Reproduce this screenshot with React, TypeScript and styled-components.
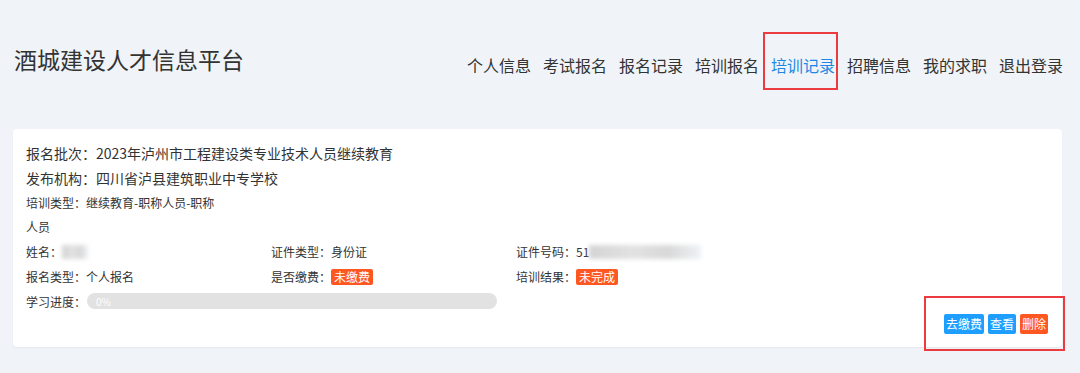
import styled, { createGlobalStyle } from 'styled-components'

const GlobalStyle = createGlobalStyle`
  html, body {
    margin: 0;
    padding: 0;
    background-color: #f0f3f7;
    font-family: "Noto Sans CJK SC", "Liberation Sans", sans-serif;
    color: #333;
  }
`

const navItems = ['个人信息', '考试报名', '报名记录', '培训报名', '培训记录', '招聘信息', '我的求职', '退出登录']

const App = () => {
  return (
    <Page>
      <GlobalStyle />
      <Header>
        <Title>酒城建设人才信息平台</Title>
        <Nav>
          {navItems.map((item) => (
            <NavItem key={item} $active={item === '培训记录'}>
              {item}
            </NavItem>
          ))}
        </Nav>
      </Header>

      <Card>
        <BigLine>报名批次：2023年泸州市工程建设类专业技术人员继续教育</BigLine>
        <BigLine>发布机构：四川省泸县建筑职业中专学校</BigLine>
        <TypeLine>培训类型：继续教育-职称人员-职称人员</TypeLine>

        <InfoGrid>
          <Cell>
            姓名：<Blurred $width={26} />
          </Cell>
          <Cell>证件类型：身份证</Cell>
          <Cell>
            证件号码：51<Blurred $width={112} />
          </Cell>

          <Cell>报名类型：个人报名</Cell>
          <Cell>
            是否缴费：<Tag>未缴费</Tag>
          </Cell>
          <Cell>
            培训结果：<Tag>未完成</Tag>
          </Cell>

          <Cell $wide>
            学习进度：
            <Progress>
              <ProgressText>0%</ProgressText>
            </Progress>
          </Cell>
        </InfoGrid>

        <Actions>
          <ButtonGroup>
            <SmallButton>去缴费</SmallButton>
            <SmallButton>查看</SmallButton>
            <SmallButton $danger>删除</SmallButton>
          </ButtonGroup>
        </Actions>
      </Card>
    </Page>
  )
}

export default App


const Page = styled.div`
  width: 1080px;
  height: 373px;
  overflow: hidden;
`

const Header = styled.div`
  height: 129px;
  display: flex;
  flex-direction: row;
  justify-content: space-between;
  align-items: flex-start;
  padding: 0 17px 0 14px;
  box-sizing: border-box;
`

const Title = styled.h1`
  margin: 43px 0 0 0;
  font-size: 23px;
  line-height: 32px;
  font-weight: 400;
  color: #333;
`

const Nav = styled.div`
  margin-top: 53px;
  display: flex;
  flex-direction: row;
  gap: 12px;
`

const NavItem = styled.div<{ $active?: boolean }>`
  position: relative;
  font-size: 16px;
  line-height: 24px;
  color: ${(p) => (p.$active ? '#1e88e5' : '#333')};
  cursor: pointer;

  ${(p) =>
    p.$active &&
    `
    &::after {
      content: '';
      position: absolute;
      left: -8px;
      right: -3px;
      top: -21px;
      bottom: -13px;
      border: 2px solid #ec3b3e;
    }
  `}
`

const Card = styled.div`
  margin: 0 18px 0 13px;
  background-color: #fff;
  border-radius: 4px;
  box-shadow: 0 1px 2px rgba(0, 0, 0, 0.05);
  padding: 12px 14px 13px 13px;
  box-sizing: border-box;
`

const BigLine = styled.div`
  font-size: 14px;
  line-height: 25px;
  color: #333;
`

const TypeLine = styled.div`
  width: 200px;
  font-size: 12px;
  line-height: 24px;
  color: #333;
`

const InfoGrid = styled.div`
  display: grid;
  grid-template-columns: 245px 245px 1fr;
  grid-auto-rows: 25px;
`

const Cell = styled.div<{ $wide?: boolean }>`
  display: flex;
  flex-direction: row;
  align-items: center;
  font-size: 12px;
  color: #333;
  grid-column: ${(p) => (p.$wide ? '1 / span 3' : 'auto')};
  height: ${(p) => (p.$wide ? '24px' : '25px')};
`

const Blurred = styled.span<{ $width: number }>`
  display: inline-block;
  width: ${(p) => p.$width}px;
  height: 14px;
  background: linear-gradient(90deg, #d4d4d4, #e2e2e2 40%, #d8d8d8 70%, #eef2f6);
  filter: blur(2px);
`

const Tag = styled.span`
  display: inline-block;
  height: 16px;
  line-height: 16px;
  padding: 0 3px;
  font-size: 12px;
  color: #fff;
  background-color: #ff5722;
  border-radius: 2px;
`

const Progress = styled.div`
  width: 410px;
  height: 16px;
  margin-left: 1px;
  background-color: #e2e2e2;
  border-radius: 20px;
  display: flex;
  align-items: center;
`

const ProgressText = styled.span`
  margin-left: 9px;
  font-size: 10px;
  color: #fff;
`

const Actions = styled.div`
  display: flex;
  flex-direction: row;
  justify-content: flex-end;
`

const ButtonGroup = styled.div`
  position: relative;
  display: flex;
  flex-direction: row;
  gap: 4px;

  &::after {
    content: '';
    position: absolute;
    left: -20px;
    right: -17px;
    top: -18px;
    bottom: -17px;
    border: 2px solid #ec3b3e;
  }
`

const SmallButton = styled.div<{ $danger?: boolean }>`
  height: 20px;
  line-height: 20px;
  padding: 0 2px;
  font-size: 12px;
  color: #fff;
  background-color: ${(p) => (p.$danger ? '#ff5722' : '#1e9fff')};
  border-radius: 2px;
  cursor: pointer;
`
